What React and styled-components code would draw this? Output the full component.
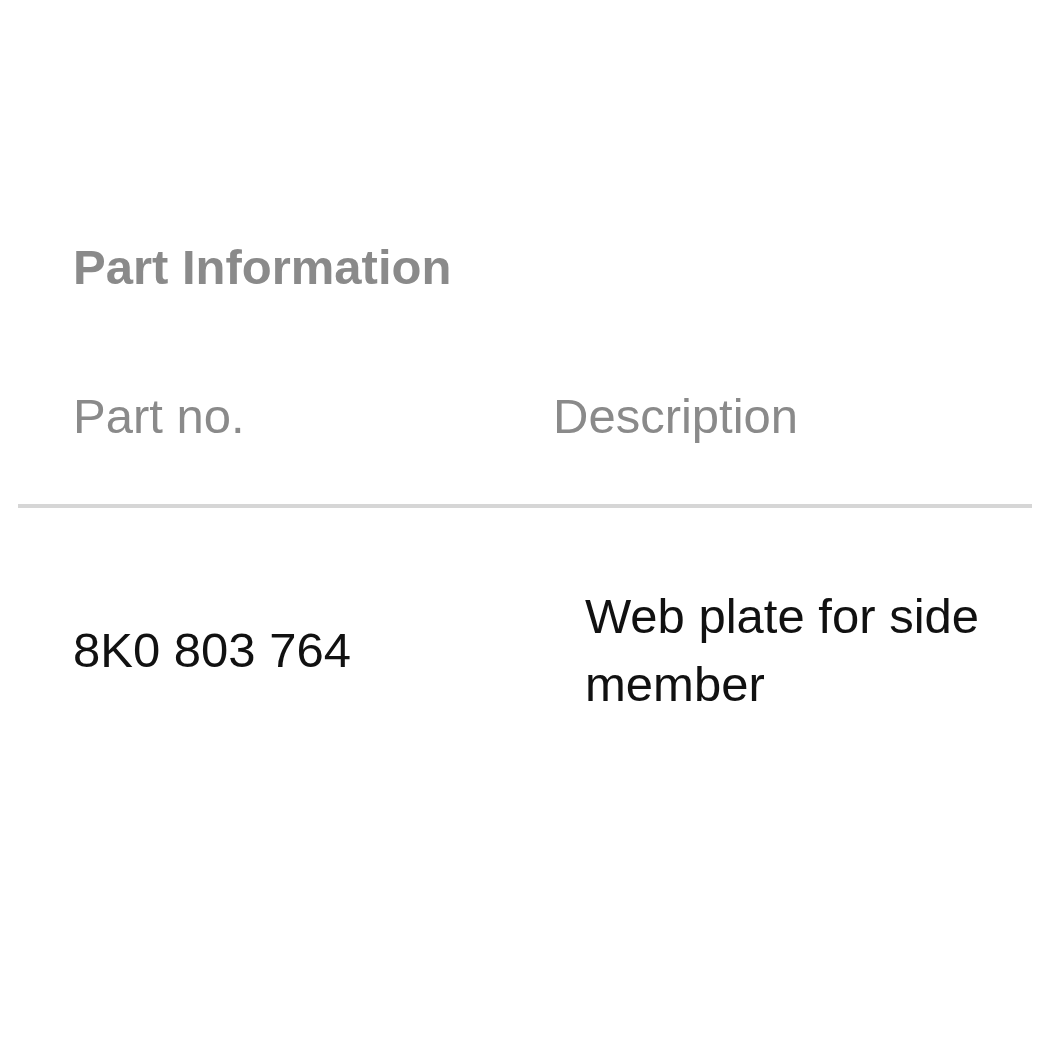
import styled, { createGlobalStyle } from 'styled-components'

const GlobalStyle = createGlobalStyle`
  body {
    margin: 0;
    background: #fff;
    font-family: "Liberation Sans", Arial, sans-serif;
  }
`

const Panel = styled.section`
  margin: 0 18px;
  padding-top: 239px;
`

const Heading = styled.h2`
  margin: 0 0 93px 55px;
  font-size: 49px;
  line-height: 56px;
  font-weight: 700;
  color: #8a8a8a;
`

const Row = styled.div`
  display: grid;
  grid-template-columns: 480px 1fr;
  align-items: center;
  font-size: 49px;
  ${({ $head }) =>
    $head
      ? `
    padding: 0 0 60px 55px;
    border-bottom: 4px solid #d6d6d6;
    color: #8a8a8a;
    line-height: 56px;
  `
      : `
    padding: 74px 0 74px 55px;
    color: #111;
    line-height: 68px;
  `}
`

const Cell = styled.div`
  padding-left: ${({ $inset }) => ($inset ? '32px' : '0')};
  padding-right: ${({ $inset }) => ($inset ? '40px' : '0')};
`

export default function App() {
  return (
    <>
      <GlobalStyle />
      <Panel>
        <Heading>Part Information</Heading>
        <Row $head>
          <Cell>Part no.</Cell>
          <Cell>Description</Cell>
        </Row>
        <Row>
          <Cell>8K0 803 764</Cell>
          <Cell $inset>Web plate for side member</Cell>
        </Row>
      </Panel>
    </>
  )
}
